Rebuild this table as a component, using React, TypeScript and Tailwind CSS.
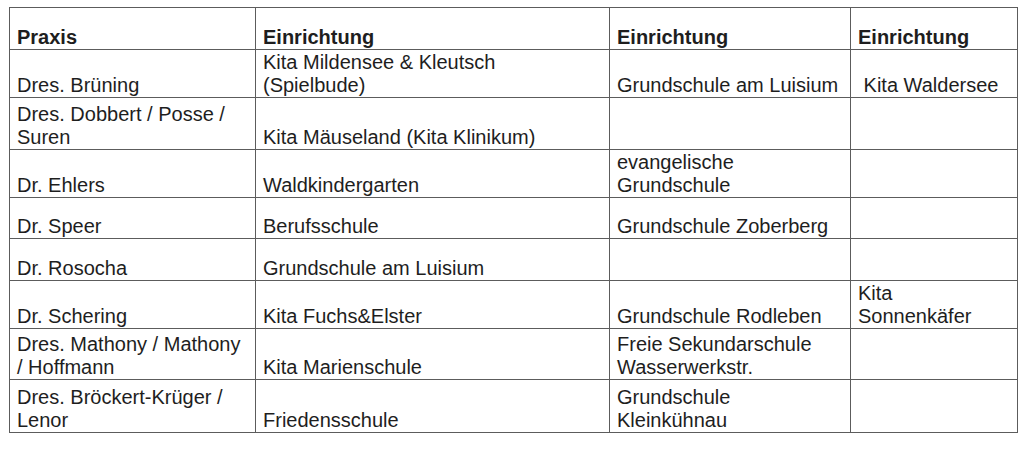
import React from "react";

type Row = { h: string; cells: React.ReactNode[] };

const rows: Row[] = [
  { h: "h-[48px]", cells: ["Dres. Brüning", <>Kita Mildensee &amp; Kleutsch<br />(Spielbude)</>, "Grundschule am Luisium", "\u00A0Kita Waldersee"] },
  { h: "h-[52px]", cells: [<>Dres. Dobbert / Posse /<br />Suren</>, "Kita Mäuseland (Kita Klinikum)", "", ""] },
  { h: "h-[48px]", cells: ["Dr. Ehlers", "Waldkindergarten", <>evangelische<br />Grundschule</>, ""] },
  { h: "h-[41px]", cells: ["Dr. Speer", "Berufsschule", "Grundschule Zoberberg", ""] },
  { h: "h-[42px]", cells: ["Dr. Rosocha", "Grundschule am Luisium", "", ""] },
  { h: "h-[48px]", cells: ["Dr. Schering", "Kita Fuchs&Elster", "Grundschule Rodleben", <>Kita<br />Sonnenkäfer</>] },
  { h: "h-[51px]", cells: [<>Dres. Mathony / Mathony<br />/ Hoffmann</>, "Kita Marienschule", <>Freie Sekundarschule<br />Wasserwerkstr.</>, ""] },
  { h: "h-[53px]", cells: [<>Dres. Bröckert-Krüger /<br />Lenor</>, "Friedensschule", <>Grundschule<br />Kleinkühnau</>, ""] },
];

const widths = ["w-[246px]", "w-[354px]", "w-[241px]", "w-[167px]"];

function Cell({ w, h, bold, children }: { w: string; h: string; bold?: boolean; children: React.ReactNode }) {
  return (
    <div
      className={`${w} ${h} flex flex-col justify-end border-r border-b border-[#5c5c5c] pl-[7px] whitespace-nowrap overflow-hidden ${bold ? "font-bold" : ""}`}
    >
      <div>{children}</div>
    </div>
  );
}

export default function App() {
  return (
    <div
      className="w-[1024px] h-[457px] bg-white pt-[7px] pl-[9px] text-[20px] leading-[23px] text-[#1e1e1e]"
      style={{ fontFamily: '"Liberation Sans", Arial, sans-serif' }}
    >
      <div className="inline-flex flex-col border-t border-l border-[#5c5c5c]">
        <div className="flex">
          {["Praxis", "Einrichtung", "Einrichtung", "Einrichtung"].map((t, i) => (
            <Cell key={i} w={widths[i]} h="h-[42px]" bold>
              {t}
            </Cell>
          ))}
        </div>
        {rows.map((r, ri) => (
          <div key={ri} className="flex">
            {r.cells.map((c, ci) => (
              <Cell key={ci} w={widths[ci]} h={r.h}>
                {c}
              </Cell>
            ))}
          </div>
        ))}
      </div>
    </div>
  );
}
